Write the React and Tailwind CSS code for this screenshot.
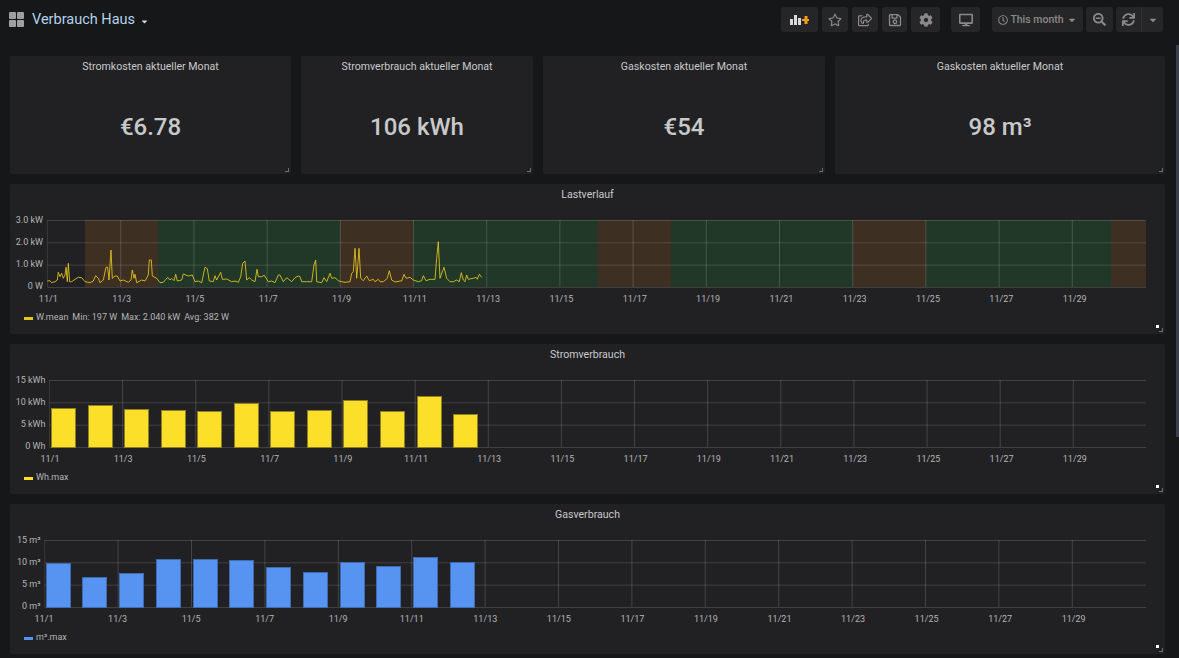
import React from 'react';
import { FaRegStar, FaRegShareSquare, FaRegSave, FaCog, FaDesktop, FaRegClock, FaSearchMinus, FaSync, FaCaretDown } from 'react-icons/fa';

const font = { fontFamily: 'Roboto, sans-serif' };

// raw points read off the chart, [x, y] in page pixels
const lineLeft = [[142,303],[150,302],[155,308],[165,305],[172,300],[175,277],[180,290],[185,280],[190,295],[195,285],[198,262],[202,305],[205,250],[209,305],[215,305],[225,298],[235,292],[245,293],[255,305],[270,308],[280,303],[287,287],[295,295],[300,308],[310,300],[318,262],[323,262],[327,300],[333,210],[337,295],[345,288],[352,288],[360,303],[370,300],[385,307],[393,300],[397,270],[402,295],[405,283],[410,308],[425,300],[435,303],[445,285],[448,240],[454,240],[457,288],[470,295],[480,308],[490,307],[503,292],[510,300],[515,295],[522,302],[527,283],[532,303],[545,300],[550,282],[565,288],[577,285],[585,305],[595,303],[605,308],[615,262],[622,266],[628,303],[640,305],[645,287],[650,300],[662,277],[667,298],[680,297],[695,305],[705,303],[715,307],[722,290],[728,250],[735,243],[740,300],[748,293],[755,300],[765,305],[771,268],[775,290],[785,290],[793,286],[805,305],[815,303],[825,308],[835,285],[840,285],[850,305],[860,293],[875,305],[885,293],[895,288],[900,290]];
const lineRight = [[5,215],[20,215],[35,215],[42,165],[47,150],[50,215],[65,218],[72,203],[80,215],[90,190],[95,205],[105,203],[115,212],[125,215],[135,217],[150,215],[155,190],[160,185],[165,115],[170,205],[173,170],[177,115],[182,205],[190,212],[200,198],[208,212],[220,208],[225,215],[235,208],[240,215],[250,215],[262,205],[268,182],[275,210],[285,216],[300,213],[305,213],[312,193],[318,205],[330,202],[340,210],[355,215],[365,212],[370,197],[378,212],[390,208],[405,208],[410,145],[415,95],[420,205],[428,182],[432,172],[440,205],[450,215],[460,215],[470,210],[478,215],[484,188],[490,210],[495,215],[500,195],[505,208],[520,205],[528,202],[532,208],[538,193],[545,202]];
const linePoints = [
  ...lineLeft.map(([x, y]) => `${(x / 3).toFixed(1)},${(180 + y / 3).toFixed(1)}`),
  ...lineRight.map(([x, y]) => `${(300 + x / 3).toFixed(1)},${(210 + y / 3).toFixed(1)}`),
].join(' ');

const dates = ['11/1', '11/3', '11/5', '11/7', '11/9', '11/11', '11/13', '11/15', '11/17', '11/19', '11/21', '11/23', '11/25', '11/27', '11/29'];

const bands = [
  [85, 158, '#3e2f23'], [158, 340, '#213728'], [340, 413, '#3e2f23'], [413, 598, '#213728'],
  [598, 671, '#3e2f23'], [671, 853, '#213728'], [853, 926, '#3e2f23'], [926, 1111, '#213728'], [1111, 1146, '#3e2f23'],
];

const stats = [
  { title: 'Stromkosten aktueller Monat', value: '€6.78', w: 'w-[281px]' },
  { title: 'Stromverbrauch aktueller Monat', value: '106 kWh', w: 'w-[232px]' },
  { title: 'Gaskosten aktueller Monat', value: '€54', w: 'w-[282px]' },
  { title: 'Gaskosten aktueller Monat', value: '98 m³', w: 'w-[330px]' },
];

const Corner = () => (
  <div className="absolute right-[2px] bottom-[2px] w-[4px] h-[4px] border-r border-b border-[#6e6e6e]" />
);

const NavButton = ({ className = '', children }) => (
  <div className={`h-[25px] flex items-center justify-center bg-[#262628] rounded-[3px] text-[#8a8a8a] ${className}`}>
    {children}
  </div>
);

const Chart = ({ title, top, left, step, yLabels, labelRight, labelStart, labelStep, children, legend, swatch }) => {
  const ticks = dates.map((d, i) => ({ d, x: left + i * step, labelX: labelStart + i * labelStep }));
  const rows = [0, 1, 2, 3].map((i) => top + i * 22.33);
  return (
    <div className="relative h-[150px] bg-[#212124] rounded-[2px]">
      <div className="h-[26px] pt-[4px] text-center text-[10.6px] leading-[13px] text-[#c8c9ca]">{title}</div>
      <svg className="block" width="1155" height="95" viewBox={`10 ${top - 10} 1155 95`}>
        {children.back}
        {rows.map((y) => (
          <line key={y} x1={left} x2="1146" y1={y + 0.5} y2={y + 0.5} stroke="#ffffff" strokeOpacity="0.14" />
        ))}
        {ticks.map((t, i) => (
          <line key={t.d} x1={t.x} x2={t.x} y1={top} y2={top + 67} stroke="#ffffff" strokeOpacity={i === 0 ? 0.1 : 0.16} />
        ))}
        {children.front}
        {yLabels.map((l, i) => (
          <text key={l} x={labelRight} y={top + 2.5 + i * 22.33} textAnchor="end" fontSize="9" fill="#b4b4b4" style={font}>{l}</text>
        ))}
        {ticks.map((t) => (
          <text key={t.d} x={t.labelX} y={top + 81.5} textAnchor="middle" fontSize="9" fill="#b4b4b4" style={font}>{t.d}</text>
        ))}
      </svg>
      <div className="flex items-center h-[12px] mt-[7px] pl-[14px] text-[9px] text-[#b4b4b4]">
        <span className={`w-[9px] h-[3px] mr-[3px] ${swatch}`} />
        {legend.map((l, i) => (
          <span key={l} className={i === 0 ? '' : 'ml-[4px]'}>{l}</span>
        ))}
      </div>
      <div className="absolute left-[1146px] top-[141px] w-[3px] h-[3px] bg-white" />
      <Corner />
    </div>
  );
};

const Bars = ({ tops, x0, step, bottom, fill, stroke }) => (
  <>
    {tops.map((t, i) => (
      <rect key={i} x={Math.round(x0 + i * step) + 0.5} y={t + 0.5} width="24" height={bottom - t} fill={fill} stroke={stroke} />
    ))}
  </>
);

const App = () => {
  return (
    <div className="relative w-[1179px] h-[658px] overflow-hidden bg-[#161719]" style={font}>
      <header className="h-[56px] flex items-start">
        <div className="flex items-center h-[39px] pl-[9px]">
          <div className="grid grid-cols-2 gap-[1px] w-[15px] h-[15px]">
            <span className="bg-[#a0a0a0] rounded-[1px]" />
            <span className="bg-[#a0a0a0] rounded-[1px]" />
            <span className="bg-[#a0a0a0] rounded-[1px]" />
            <span className="bg-[#a0a0a0] rounded-[1px]" />
          </div>
          <span className="ml-[8px] pt-[1px] text-[14.5px] text-[#b3d2ea]">Verbrauch Haus</span>
          <FaCaretDown className="ml-[5px] mt-[3px] text-[#d8d9da] w-[9px] h-[9px]" />
        </div>
        <div className="ml-auto mr-[16px] mt-[7px] flex items-center text-[14px]">
          <NavButton className="w-[37px]">
            <svg width="19" height="10" viewBox="0 0 19 10">
              <rect x="0" y="4" width="3" height="6" fill="#d8d9da" />
              <rect x="4" y="0" width="3" height="10" fill="#d8d9da" />
              <rect x="8" y="3" width="3" height="7" fill="#d8d9da" />
              <path d="M14.5 1h3v3h1.5v2h-1.5v3h-3V6H12V4h2.5z" fill="#f39c1f" />
            </svg>
          </NavButton>
          <NavButton className="w-[26px] ml-[4px]"><FaRegStar /></NavButton>
          <NavButton className="w-[26px] ml-[4px]"><FaRegShareSquare /></NavButton>
          <NavButton className="w-[25px] ml-[4px]"><FaRegSave /></NavButton>
          <NavButton className="w-[29px] ml-[4px]"><FaCog /></NavButton>
          <NavButton className="w-[29px] ml-[11px]"><FaDesktop /></NavButton>
          <NavButton className="w-[91px] ml-[12px] text-[10.5px] font-medium">
            <FaRegClock className="w-[10px] h-[10px] mr-[2px]" />
            <span className="pt-[1px]">This month</span>
            <FaCaretDown className="w-[10px] h-[10px] ml-[3px]" />
          </NavButton>
          <NavButton className="w-[27px] ml-[3px]"><FaSearchMinus className="w-[13px] h-[13px]" /></NavButton>
          <NavButton className="w-[26px] ml-[3px] rounded-r-none border-r border-[#303033]"><FaSync className="w-[13px] h-[13px]" /></NavButton>
          <NavButton className="w-[21px] rounded-l-none"><FaCaretDown className="w-[10px] h-[10px]" /></NavButton>
        </div>
      </header>

      <main className="pl-[10px] w-[1165px] flex flex-col gap-[10px]">
        <div className="flex gap-[10px]">
          {stats.map((s, i) => (
            <div key={i} className={`relative h-[118px] bg-[#212124] rounded-[2px] ${s.w}`}>
              <div className="pt-[4px] text-center text-[10.6px] leading-[13px] text-[#c8c9ca]">{s.title}</div>
              <div className="mt-[38px] text-center text-[24px] leading-[32px] font-medium text-[#c8c9ca]">{s.value}</div>
              <Corner />
            </div>
          ))}
        </div>

        <Chart
          title="Lastverlauf"
          top={220}
          left={47.5}
          step={73.2}
          labelRight={43}
          labelStart={48.3}
          labelStep={73.31}
          yLabels={['3.0 kW', '2.0 kW', '1.0 kW', '0 W']}
          swatch="bg-[#e5c81e]"
          legend={['W.mean', 'Min: 197 W', 'Max: 2.040 kW', 'Avg: 382 W']}
        >
          {{
            back: bands.map(([a, b, c]) => <rect key={a} x={a} y="220" width={b - a} height="67" fill={c} />),
            front: <polyline points={linePoints} fill="none" stroke="#e5c81e" strokeOpacity="0.85" strokeWidth="1" strokeLinejoin="round" />,
          }}
        </Chart>

        <Chart
          title="Stromverbrauch"
          top={380}
          left={49.5}
          step={73.13}
          labelRight={45.5}
          labelStart={50}
          labelStep={73.2}
          yLabels={['15 kWh', '10 kWh', '5 kWh', '0 Wh']}
          swatch="bg-[#fade2a]"
          legend={['Wh.max']}
        >
          {{
            back: null,
            front: <Bars tops={[408, 405, 409, 410, 411, 403, 411, 410, 400, 411, 396, 414]} x0={51.2} step={36.53} bottom={447} fill="#fbdf28" stroke="#8f8026" />,
          }}
        </Chart>

        <Chart
          title="Gasverbrauch"
          top={540}
          left={44.7}
          step={73.4}
          labelRight={40.5}
          labelStart={44}
          labelStep={73.55}
          yLabels={['15 m³', '10 m³', '5 m³', '0 m³']}
          swatch="bg-[#5794f2]"
          legend={['m³.max']}
        >
          {{
            back: null,
            front: <Bars tops={[563, 577, 573, 559, 559, 560, 567, 572, 562, 566, 557, 562]} x0={45.7} step={36.73} bottom={607} fill="#5794f2" stroke="#3f6bb0" />,
          }}
        </Chart>
      </main>

      <div className="absolute right-0 top-[45px] w-[3px] h-[392px] bg-[#3b3f4c]" />
    </div>
  );
};

export default App;
